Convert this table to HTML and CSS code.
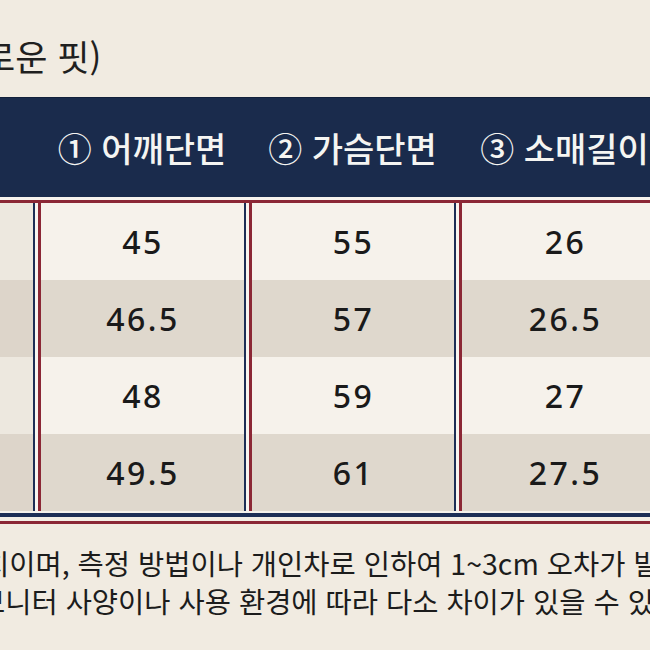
FILE: index.html
```html
<!DOCTYPE html>
<html lang="ko">
<head>
<meta charset="utf-8">
<link rel="stylesheet" href="styles.css">
</head>
<body>
<div class="page">
  <div class="title">로운 핏)</div>
  <div class="table">
    <div class="head">
      <div class="hcell"></div>
      <div class="hcell">① 어깨단면</div>
      <div class="hcell">② 가슴단면</div>
      <div class="hcell">③ 소매길이</div>
    </div>
    <div class="sep-top"></div>
    <div class="body">
      <div class="row light">
        <div class="cell first"></div>
        <div class="cell">45</div>
        <div class="cell">55</div>
        <div class="cell">26</div>
      </div>
      <div class="row dark">
        <div class="cell first"></div>
        <div class="cell">46.5</div>
        <div class="cell">57</div>
        <div class="cell">26.5</div>
      </div>
      <div class="row light">
        <div class="cell first"></div>
        <div class="cell">48</div>
        <div class="cell">59</div>
        <div class="cell">27</div>
      </div>
      <div class="row dark">
        <div class="cell first"></div>
        <div class="cell">49.5</div>
        <div class="cell">61</div>
        <div class="cell">27.5</div>
      </div>
    </div>
    <div class="sep-bottom"></div>
  </div>
  <div class="note">
    <div class="line l1">치이며, 측정 방법이나 개인차로 인하여 1~3cm 오차가 발생할 수 있습니다.</div>
    <div class="line l2">모니터 사양이나 사용 환경에 따라 다소 차이가 있을 수 있습니다.</div>
  </div>
</div>
</body>
</html>
```

FILE: styles.css
```css
html, body {
  margin: 0;
  padding: 0;
  width: 650px;
  height: 650px;
  overflow: hidden;
  background: #f1ebe1;
}

.page {
  width: 900px;
  font-family: "Noto Sans CJK KR", "Noto Sans", sans-serif;
  color: #222;
}

.title {
  padding-top: 36px;
  margin-left: -17px;
  height: 40px;
  line-height: 40px;
  font-size: 35px;
  color: #1f1f1f;
  white-space: nowrap;
  margin-bottom: 21px;
}

.head {
  display: grid;
  grid-template-columns: 33px 211px 210px 214px;
  height: 100px;
  background: #1a2b4c;
  border-top: 1px solid #12203b;
  box-sizing: border-box;
}

.hcell {
  display: flex;
  align-items: center;
  justify-content: center;
  padding-left: 7px;
  color: #f5f5f2;
  font-size: 34px;
  font-weight: 500;
  white-space: nowrap;
}

.hcell:first-child {
  padding-left: 0;
}

.sep-top {
  height: 3px;
  background: #f7f3ee;
  border-bottom: 3px solid #8b2735;
}

.row {
  display: grid;
  grid-template-columns: 33px 211px 210px 214px;
  height: 77px;
}

.row.light { background: #f6f2eb; }
.row.dark { background: #dfd8cd; }

.cell {
  display: flex;
  align-items: center;
  justify-content: center;
  padding-left: 7px;
  font-family: "Noto Sans", sans-serif;
  font-size: 32px;
  font-weight: 500;
  letter-spacing: 2.5px;
  color: #1a1a1a;
  border-left: 2px solid #1d2e56;
  box-shadow: inset 3px 0 0 #f8f5f0, inset 6px 0 0 #8b2735;
}

.cell.first {
  border-left: none;
  box-shadow: none;
  padding-left: 0;
}

.row.light .cell.first { background: #ede8df; }
.row.dark .cell.first { background: #ddd5ca; }

.sep-bottom {
  height: 4px;
  border-top: 2px solid #f6f2ec;
  background: #1d2e56;
  border-bottom: 4px solid #f3eee6;
  box-shadow: 0 3px 0 0 #8b2735;
  margin-bottom: 3px;
}

.note {
  margin-top: 23px;
  font-size: 28.5px;
  line-height: 38px;
  color: #1c1c1c;
  white-space: nowrap;
}

.l1 { margin-left: -17px; }
.l2 { margin-left: -21px; }
```
